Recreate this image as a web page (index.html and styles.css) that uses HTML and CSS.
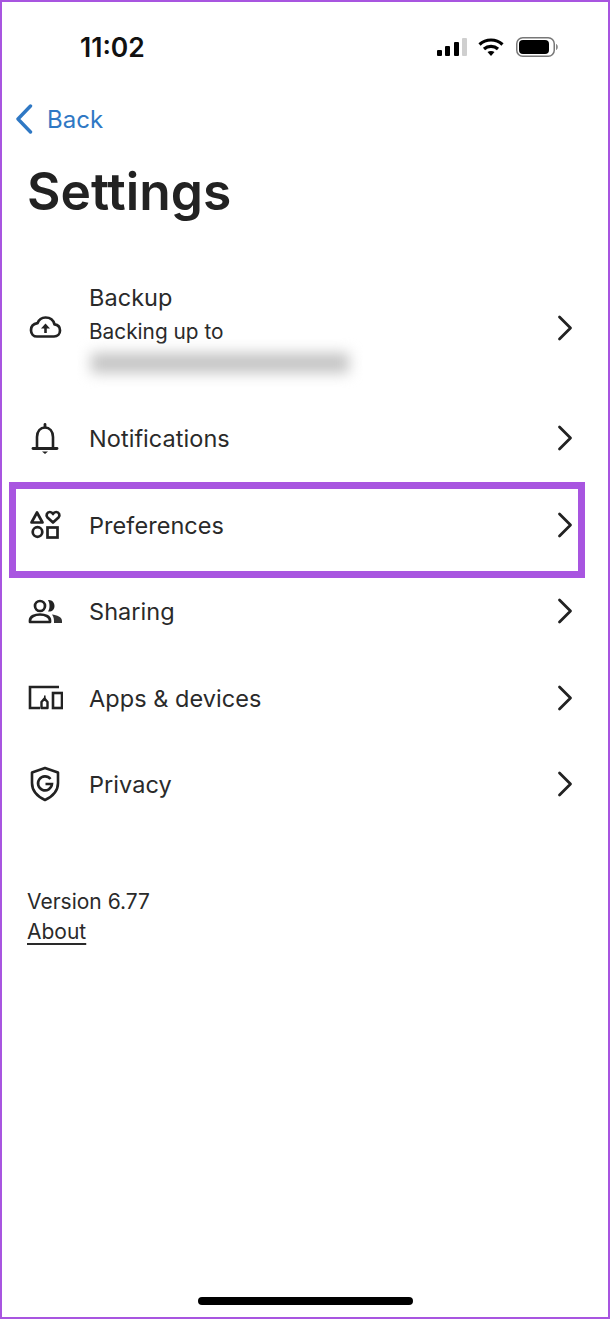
FILE: index.html
```html
<!DOCTYPE html>
<html>
<head>
    <meta charset="UTF-8" />
    <title>Settings</title>
    <link rel="stylesheet" href="styles.css">
</head>

<body>
<div class="screen">
    <div class="status-bar">
        <div class="status-time">11:02</div>
        <div class="status-icons">
            <svg class="icon-signal" width="30" height="18" viewBox="0 0 30 18">
                <rect x="0" y="12" width="5" height="6" rx="1" fill="#000"/>
                <rect x="8" y="8" width="5" height="10" rx="1" fill="#000"/>
                <rect x="17" y="4" width="5" height="14" rx="1" fill="#000"/>
                <rect x="25" y="0" width="5" height="18" rx="1" fill="#cfcfcf"/>
            </svg>
            <svg class="icon-wifi" width="26" height="18" viewBox="0 0 26 18">
                <path d="M1.5 6.5 C8 0.5 18 0.5 24.5 6.5" fill="none" stroke="#000" stroke-width="3.2"/>
                <path d="M6 11 C10 7.5 16 7.5 20 11" fill="none" stroke="#000" stroke-width="3.2"/>
                <path d="M9.5 14 L13 18 L16.5 14 C14.5 12.5 11.5 12.5 9.5 14 Z" fill="#000"/>
            </svg>
            <svg class="icon-battery" width="42" height="20" viewBox="0 0 42 20">
                <rect x="0.75" y="0.75" width="37.5" height="18.5" rx="6" fill="none" stroke="#777" stroke-width="1.5"/>
                <rect x="3" y="3" width="30" height="14" rx="4" fill="#000"/>
                <path d="M40.5 7.5 C41.5 8.5 41.5 11.5 40.5 12.5 Z" fill="#888" stroke="#888"/>
            </svg>
        </div>
    </div>

    <div class="nav-bar">
        <svg width="18" height="30" viewBox="0 0 18 30">
            <path d="M15.5 2 L3 15 L15.5 28" fill="none" stroke="#2f78c4" stroke-width="3.4" stroke-linecap="round" stroke-linejoin="round"/>
        </svg>
        <span class="back-label">Back</span>
    </div>

    <h1 class="page-title">Settings</h1>

    <div class="settings-list">
        <div class="settings-row row-backup">
            <svg class="row-icon" width="36" height="36" viewBox="0 0 36 36">
                <path d="M10 26.5 H27 C30.5 26.5 33 24 33 20.5 C33 17.2 30.8 14.8 27.5 14.4 C26.5 10.2 23 7.5 18.5 7.5 C14.8 7.5 11.8 9.8 10.5 13.2 C6.5 13.8 4 16.6 4 20.2 C4 23.8 6.6 26.5 10 26.5 Z" fill="none" stroke="#222" stroke-width="2.7" stroke-linejoin="round"/>
                <path d="M18.5 23 V16" fill="none" stroke="#222" stroke-width="2.6"/>
                <path d="M14 18.5 L18.5 13.5 L23 18.5 Z" fill="#222"/>
            </svg>
            <div class="row-text">
                <div class="row-label">Backup</div>
                <div class="row-sub">Backing up to</div>
                <div class="row-blur"></div>
            </div>
            <svg class="row-chevron" width="16" height="26" viewBox="0 0 16 26">
                <path d="M2.5 2 L13.5 13 L2.5 24" fill="none" stroke="#222" stroke-width="2.8" stroke-linecap="round" stroke-linejoin="round"/>
            </svg>
        </div>

        <div class="settings-row">
            <svg class="row-icon" width="36" height="36" viewBox="0 0 36 36">
                <path d="M10 28 V17 C10 11 13.5 7.5 18 7.5 C22.5 7.5 26 11 26 17 V28" fill="none" stroke="#222" stroke-width="2.6"/>
                <path d="M6 28.5 H30" fill="none" stroke="#222" stroke-width="2.8" stroke-linecap="round"/>
                <path d="M18 4.5 V7" fill="none" stroke="#222" stroke-width="2.8" stroke-linecap="round"/>
                <path d="M15 31.5 H21 L18 34 Z" fill="#222"/>
            </svg>
            <div class="row-text">
                <div class="row-label">Notifications</div>
            </div>
            <svg class="row-chevron" width="16" height="26" viewBox="0 0 16 26">
                <path d="M2.5 2 L13.5 13 L2.5 24" fill="none" stroke="#222" stroke-width="2.8" stroke-linecap="round" stroke-linejoin="round"/>
            </svg>
        </div>

        <div class="settings-row">
            <div class="row-highlight"></div>
            <svg class="row-icon" width="36" height="36" viewBox="0 0 36 36">
                <path d="M10 5.5 L15.5 15.5 H4.5 Z" fill="none" stroke="#222" stroke-width="2.7" stroke-linejoin="round"/>
                <path d="M26 15.5 L20.5 10.5 C18.5 8.5 20 5 22.8 5 C24.4 5 25.5 6 26 7 C26.5 6 27.6 5 29.2 5 C32 5 33.5 8.5 31.5 10.5 Z" fill="none" stroke="#222" stroke-width="2.7" stroke-linejoin="round"/>
                <circle cx="10.5" cy="25" r="4.8" fill="none" stroke="#222" stroke-width="2.7"/>
                <rect x="20.5" y="20.5" width="10" height="10" fill="none" stroke="#222" stroke-width="2.7"/>
            </svg>
            <div class="row-text">
                <div class="row-label">Preferences</div>
            </div>
            <svg class="row-chevron" width="16" height="26" viewBox="0 0 16 26">
                <path d="M2.5 2 L13.5 13 L2.5 24" fill="none" stroke="#222" stroke-width="2.8" stroke-linecap="round" stroke-linejoin="round"/>
            </svg>
        </div>

        <div class="settings-row">
            <svg class="row-icon" width="36" height="36" viewBox="0 0 36 36">
                <circle cx="13" cy="13" r="5" fill="none" stroke="#222" stroke-width="2.7"/>
                <path d="M3 29 V27.5 C3 23.5 8 21.5 13 21.5 C18 21.5 23 23.5 23 27.5 V29 Z" fill="none" stroke="#222" stroke-width="2.7" stroke-linejoin="round"/>
                <path d="M21 7 C25 6.5 27.5 9.5 27.5 13 C27.5 16.5 25 19 21 18.5 C23 15.5 23 10.5 21 7 Z" fill="#222"/>
                <path d="M25 21.5 C30 22 35 24 35 28 V30 H27 C27 26.5 27 24 25 21.5 Z" fill="#333"/>
            </svg>
            <div class="row-text">
                <div class="row-label">Sharing</div>
            </div>
            <svg class="row-chevron" width="16" height="26" viewBox="0 0 16 26">
                <path d="M2.5 2 L13.5 13 L2.5 24" fill="none" stroke="#222" stroke-width="2.8" stroke-linecap="round" stroke-linejoin="round"/>
            </svg>
        </div>

        <div class="settings-row">
            <svg class="row-icon" width="36" height="36" viewBox="0 0 36 36">
                <path d="M32 7 H3 V28 H13" fill="none" stroke="#222" stroke-width="2.6"/>
                <rect x="26" y="13" width="9" height="15" fill="none" stroke="#222" stroke-width="2.6"/>
                <path d="M17.5 18.5 L20.5 22 V28 H14.5 V22 Z" fill="none" stroke="#222" stroke-width="2.4" stroke-linejoin="round"/>
                <rect x="17" y="15.5" width="1.6" height="3" fill="#222"/>
            </svg>
            <div class="row-text">
                <div class="row-label">Apps &amp; devices</div>
            </div>
            <svg class="row-chevron" width="16" height="26" viewBox="0 0 16 26">
                <path d="M2.5 2 L13.5 13 L2.5 24" fill="none" stroke="#222" stroke-width="2.8" stroke-linecap="round" stroke-linejoin="round"/>
            </svg>
        </div>

        <div class="settings-row">
            <svg class="row-icon" width="36" height="36" viewBox="0 0 36 36">
                <path d="M18 2 L31 6.5 V17 C31 25 25.5 30.5 18 34 C10.5 30.5 5 25 5 17 V6.5 Z" fill="none" stroke="#222" stroke-width="2.6" stroke-linejoin="round"/>
                <path d="M23.5 13 A7 7 0 1 0 25 18 H18.5" fill="none" stroke="#222" stroke-width="2.6"/>
            </svg>
            <div class="row-text">
                <div class="row-label">Privacy</div>
            </div>
            <svg class="row-chevron" width="16" height="26" viewBox="0 0 16 26">
                <path d="M2.5 2 L13.5 13 L2.5 24" fill="none" stroke="#222" stroke-width="2.8" stroke-linecap="round" stroke-linejoin="round"/>
            </svg>
        </div>
    </div>

    <div class="version-block">
        <div>Version 6.77</div>
        <a class="about-link">About</a>
    </div>

    <div class="home-indicator"></div>
</div>
</body>
</html>
```

FILE: styles.css
```css
* {
    margin: 0;
    padding: 0;
    box-sizing: border-box;
    font-family: Inter, "Noto Sans", sans-serif;
}

:root {
    --frame-color: #a855e0;
    --text-color: #2a2a2a;
    --link-color: #2f78c4;
}

body {
    background-color: #fff;
    color: var(--text-color);
}

.screen {
    width: 610px;
    height: 1319px;
    border: 2px solid var(--frame-color);
    display: flex;
    flex-direction: column;
    overflow: hidden;
}

/* Status bar */
.status-bar {
    height: 90px;
    display: flex;
    align-items: center;
    padding: 0 50px 0 78px;
}

.status-time {
    font-size: 26.5px;
    font-weight: 600;
    color: #111;
}

.status-icons {
    margin-left: auto;
    display: flex;
    align-items: center;
    gap: 11px;
}

.icon-battery {
    margin-left: 1px;
}

/* Back + title */
.nav-bar {
    height: 54px;
    display: flex;
    align-items: center;
    gap: 14px;
    padding-left: 13px;
}

.back-label {
    font-size: 24px;
    color: var(--link-color);
}

.page-title {
    height: 90px;
    line-height: 90px;
    padding-left: 25px;
    font-size: 51.5px;
    font-weight: 600;
    color: #222;
}

/* List */
.settings-list {
    margin-top: 25px;
    padding: 0 35px 0 25px;
}

.settings-row {
    position: relative;
    height: 86.5px;
    display: flex;
    align-items: center;
    gap: 26px;
}

.row-backup {
    height: 134px;
}

.row-text {
    flex: 1;
}

.row-label {
    font-size: 23.5px;
    line-height: 32px;
    padding-top: 2px;
    letter-spacing: 0.05px;
}

.row-sub {
    font-size: 20.8px;
    line-height: 30px;
    margin-top: 3px;
}

.row-blur {
    width: 258px;
    height: 20px;
    margin: 6px 0 3px 2px;
    background-color: #c4c4c4;
    filter: blur(7px);
}

.row-highlight {
    position: absolute;
    left: -18px;
    right: -12px;
    top: 0;
    bottom: -10px;
    border: 7px solid var(--frame-color);
}

/* Footer */
.version-block {
    margin-top: 59px;
    padding-left: 25px;
    font-size: 21px;
    line-height: 30px;
}

.about-link {
    text-decoration: underline;
    text-underline-offset: 4px;
}

.home-indicator {
    width: 215px;
    height: 8px;
    margin: auto 0 12px 196px;
    border-radius: 4px;
    background-color: #000;
}
```
